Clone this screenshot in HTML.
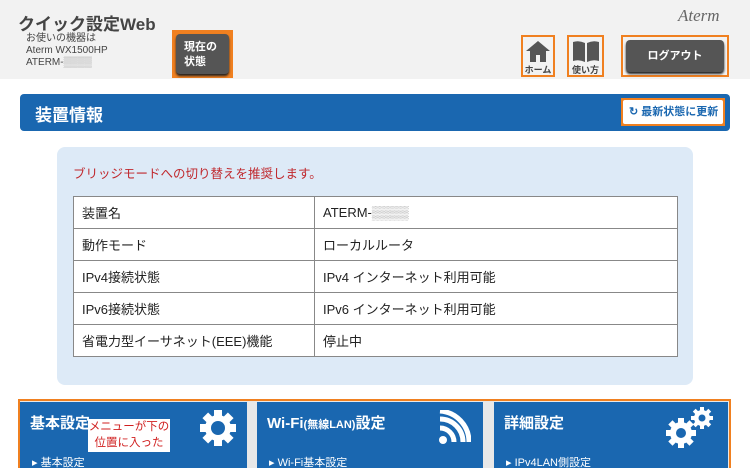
<!DOCTYPE html>
<html><head><meta charset="utf-8"><style>
*{margin:0;padding:0;box-sizing:border-box}
body{width:750px;height:468px;overflow:hidden;background:#fff;font-family:"Liberation Sans","Noto Sans CJK JP",sans-serif;position:relative}
.hd{position:absolute;left:0;top:0;width:750px;height:79px;background:#f2f2f2}
.abs{position:absolute}
.btn{background:#555;color:#fff;font-weight:bold;border-radius:4px;box-shadow:0 2px 2px #222}
.ob{border:2px solid #f08020}
table{border-collapse:collapse}
td{border:1px solid #888;height:32px;font-size:13px;padding-left:8px;color:#222}
.card{position:absolute;top:402px;height:66px;background:#1a67b0;color:#fff}
.card h3{position:absolute;left:10px;top:10px;font-size:15px}
.card .s{position:absolute;left:12px;top:52px;font-size:11px}
</style></head><body>
<div class="hd"></div>
<div class="abs" style="left:18px;top:10px;font-size:17px;font-weight:bold;color:#444">クイック設定Web</div>
<div class="abs" style="left:26px;top:33px;font-size:10px;color:#444;line-height:12px">お使いの機器は<br>Aterm WX1500HP<br>ATERM-<span style="color:#999">▒▒▒▒</span></div>
<div class="abs ob" style="left:172px;top:30px;width:61px;height:48px;background:#f08020;padding:2px"><div class="btn" style="width:53px;height:40px;font-size:11px;padding:6px 0 0 8px;line-height:15px">現在の<br>状態</div></div>
<div class="abs" style="left:678px;top:6px;font-size:17px;font-style:italic;color:#666;font-family:'Liberation Serif',serif">Aterm</div>
<div class="abs ob" style="left:521px;top:35px;width:34px;height:42px;font-size:9px;font-weight:bold;color:#444;text-align:center">
<svg width="28" height="24" viewBox="0 0 28 24" style="display:block;margin:2px auto 0"><path d="M14 2L2 12h4v11h6v-7h4v7h6V12h4z" fill="#555"/></svg>ホーム</div>
<div class="abs ob" style="left:567px;top:35px;width:37px;height:42px;font-size:9px;font-weight:bold;color:#444;text-align:center">
<svg width="30" height="24" viewBox="0 0 30 24" style="display:block;margin:2px auto 0"><path d="M2 3q6-2 12 1v19q-6-3-12-1zM16 4q6-3 12-1v19q-6-2-12 1z" fill="#555"/></svg>使い方</div>
<div class="abs ob" style="left:621px;top:35px;width:108px;height:42px;padding:3px"><div class="btn" style="height:32px;font-size:11px;text-align:center;line-height:32px">ログアウト</div></div>
<div class="abs" style="left:20px;top:94px;width:710px;height:37px;background:#1a67b0;border-radius:4px"></div>
<div class="abs" style="left:35px;top:101px;font-size:17px;font-weight:bold;color:#fff">装置情報</div>
<div class="abs" style="left:621px;top:98px;width:104px;height:28px;background:#f08020;padding:2px"><div style="background:#fff;height:24px;border-radius:2px;font-size:11px;font-weight:bold;color:#1a67b0;line-height:24px;padding-left:6px">↻ 最新状態に更新</div></div>
<div class="abs" style="left:57px;top:147px;width:636px;height:238px;background:#ddeaf7;border-radius:8px"></div>
<div class="abs" style="left:73px;top:163px;font-size:12.5px;color:#c0282d">ブリッジモードへの切り替えを推奨します。</div>
<table class="abs" style="left:73px;top:196px;width:605px;background:#fff">
<tr><td style="width:241px">装置名</td><td>ATERM-<span style="color:#999">▒▒▒▒</span></td></tr>
<tr><td>動作モード</td><td>ローカルルータ</td></tr>
<tr><td>IPv4接続状態</td><td>IPv4 インターネット利用可能</td></tr>
<tr><td>IPv6接続状態</td><td>IPv6 インターネット利用可能</td></tr>
<tr><td>省電力型イーサネット(EEE)機能</td><td>停止中</td></tr>
</table>
<div class="abs" style="left:18px;top:399px;width:713px;height:69px;border:2px solid #f08020;border-bottom:none;background:#e8e8e8"></div>
<div class="card" style="left:20px;width:227px"><h3>基本設定</h3><div class="s">▸ 基本設定</div>
<svg class="abs" style="left:178px;top:6px" width="40" height="40" viewBox="0 0 40 40"><g fill="#fff"><circle cx="20" cy="20" r="13"/><rect x="16" y="2" width="8" height="36"/><rect x="2" y="16" width="36" height="8"/><rect x="16" y="2" width="8" height="36" transform="rotate(45 20 20)"/><rect x="16" y="2" width="8" height="36" transform="rotate(-45 20 20)"/></g><circle cx="20" cy="20" r="7" fill="#1a67b0"/></svg></div>
<div class="abs" style="left:88px;top:419px;width:82px;height:33px;background:#fff;color:#d02020;font-size:11.5px;text-align:center;line-height:16px;white-space:nowrap">メニューが下の<br>位置に入った</div>
<div class="card" style="left:257px;width:226px"><h3>Wi-Fi<span style="font-size:11px">(無線LAN)</span>設定</h3><div class="s">▸ Wi-Fi基本設定</div>
<svg class="abs" style="left:180px;top:8px" width="34" height="36" viewBox="0 0 34 36"><g fill="none" stroke="#fff" stroke-width="5"><path d="M3 18a14 14 0 0 1 14 14"/><path d="M3 9a23 23 0 0 1 23 23"/><path d="M3 1a31 31 0 0 1 29 31"/></g><circle cx="6" cy="30" r="4" fill="#fff"/></svg></div>
<div class="card" style="left:494px;width:234px"><h3>詳細設定</h3><div class="s">▸ IPv4LAN側設定</div>
<svg class="abs" style="left:170px;top:4px" width="52" height="44" viewBox="0 0 52 44"><g fill="#fff"><circle cx="17" cy="27" r="11"/><rect x="14" y="12" width="6" height="30"/><rect x="2" y="24" width="30" height="6"/><rect x="14" y="12" width="6" height="30" transform="rotate(45 17 27)"/><rect x="14" y="12" width="6" height="30" transform="rotate(-45 17 27)"/><circle cx="38" cy="12" r="8"/><rect x="36" y="1" width="4" height="22"/><rect x="27" y="10" width="22" height="4"/><rect x="36" y="1" width="4" height="22" transform="rotate(45 38 12)"/><rect x="36" y="1" width="4" height="22" transform="rotate(-45 38 12)"/></g><circle cx="17" cy="27" r="5" fill="#1a67b0"/><circle cx="38" cy="12" r="3.5" fill="#1a67b0"/></svg></div>
</body></html>
